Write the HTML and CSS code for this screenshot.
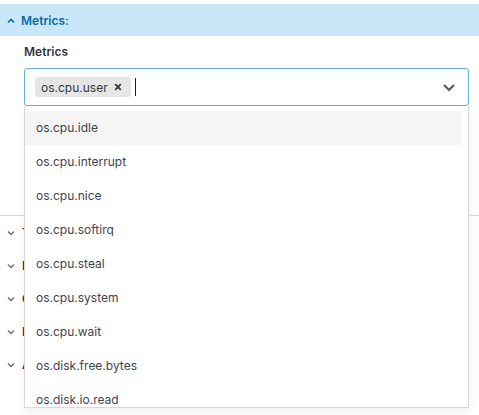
FILE: index.html
```html
<!DOCTYPE html>
<html>
<head>
<meta charset="utf-8">
<link rel="stylesheet" href="styles.css">
</head>
<body>
<div class="page">
  <div class="section-head open">
    <svg class="caret" width="8" height="6" viewBox="0 0 8 6"><path d="M1 4.5 L4 1.5 L7 4.5" fill="none" stroke="#0a6a9e" stroke-width="1.6"/></svg>
    <span class="head-title">Metrics:</span>
  </div>
  <div class="section-body">
    <div class="label">Metrics</div>
    <div class="combo">
      <div class="input">
        <span class="tag"><span class="tag-text">os.cpu.user</span><svg class="tag-x" width="8" height="8" viewBox="0 0 8 8"><path d="M1.2 1.2 L6.8 6.8 M6.8 1.2 L1.2 6.8" stroke="#343741" stroke-width="1.8"/></svg></span>
        <span class="cursor"></span>
        <svg class="chev" width="14" height="9" viewBox="0 0 14 9"><path d="M2 2 L7 7 L12 2" fill="none" stroke="#555a62" stroke-width="2.2"/></svg>
      </div>
      <div class="dropdown">
        <div class="list">
          <div class="item active">os.cpu.idle</div>
          <div class="item">os.cpu.interrupt</div>
          <div class="item">os.cpu.nice</div>
          <div class="item">os.cpu.softirq</div>
          <div class="item">os.cpu.steal</div>
          <div class="item">os.cpu.system</div>
          <div class="item">os.cpu.wait</div>
          <div class="item">os.disk.free.bytes</div>
          <div class="item">os.disk.io.read</div>
          <div class="item">os.disk.io.write</div>
        </div>
      </div>
    </div>
  </div>
  <div class="collapsed">
    <div class="row"><svg class="caret-d" width="8" height="6" viewBox="0 0 8 6"><path d="M1 1.5 L4 4.5 L7 1.5" fill="none" stroke="#69707d" stroke-width="1.5"/></svg><span class="row-title">Time range</span></div>
    <div class="row"><svg class="caret-d" width="8" height="6" viewBox="0 0 8 6"><path d="M1 1.5 L4 4.5 L7 1.5" fill="none" stroke="#69707d" stroke-width="1.5"/></svg><span class="row-title">Filters</span></div>
    <div class="row"><svg class="caret-d" width="8" height="6" viewBox="0 0 8 6"><path d="M1 1.5 L4 4.5 L7 1.5" fill="none" stroke="#69707d" stroke-width="1.5"/></svg><span class="row-title">Columns</span></div>
    <div class="row"><svg class="caret-d" width="8" height="6" viewBox="0 0 8 6"><path d="M1 1.5 L4 4.5 L7 1.5" fill="none" stroke="#69707d" stroke-width="1.5"/></svg><span class="row-title">Format</span></div>
    <div class="row"><svg class="caret-d" width="8" height="6" viewBox="0 0 8 6"><path d="M1 1.5 L4 4.5 L7 1.5" fill="none" stroke="#69707d" stroke-width="1.5"/></svg><span class="row-title">Advanced</span></div>
  </div>
</div>
</body>
</html>
```
FILE: styles.css
```css
* { box-sizing: border-box; }
html, body { margin: 0; padding: 0; background: #fff; }
body {
  font-family: Inter, "Noto Sans", sans-serif;
  font-size: 12px;
  color: #343741;
  width: 479px;
  height: 415px;
  overflow: hidden;
}
.page { padding-top: 4px; }
.section-head {
  height: 32px;
  background: #c8e8f9;
  display: flex;
  align-items: center;
  padding-left: 7px;
}
.caret { margin-right: 6px; margin-top: 1px; }
.head-title {
  color: #0a6a9e;
  font-weight: 600;
  font-size: 12px;
}
.section-body {
  padding: 8px 10px 0 24px;
  height: 179px;
}
.label {
  font-weight: 600;
  font-size: 12px;
  color: #343741;
  line-height: 15px;
  height: 24px;
}
.combo { position: relative; }
.input {
  height: 38px;
  border: 1px solid #6aaee6;
  border-radius: 3px;
  display: flex;
  align-items: center;
  padding-left: 10px;
  background: #fff;
}
.tag {
  display: flex;
  align-items: center;
  height: 20px;
  background: #e6e6e6;
  border-radius: 3px;
  padding: 0 9px 0 6px;
  width: 96px;
}
.tag-text { font-size: 12px; color: #343741; flex: 1; }
.tag-x { display: block; }
.cursor {
  width: 1px;
  height: 18px;
  background: #222;
  margin-left: 4px;
}
.chev { margin-left: auto; margin-right: 12px; }
.dropdown {
  position: absolute;
  top: 38px;
  left: 0;
  right: 0;
  height: 302px;
  border: 1px solid #d8d8d8;
  border-top: none;
  background: #fff;
  box-shadow: 0 4px 8px rgba(0,0,0,0.06);
  overflow: hidden;
  padding: 5px 7px 0 0;
}
.item {
  height: 34px;
  line-height: 34px;
  padding-left: 11px;
  font-size: 12px;
  color: #3f434c;
}
.item.active { background: #f5f5f5; }
.collapsed { border-top: 1px solid #d8d8d8; }
.row {
  height: 33px;
  display: flex;
  align-items: center;
  padding-left: 7px;
}
.caret-d { margin-right: 7px; }
.row-title { font-weight: 600; color: #343741; }
```
